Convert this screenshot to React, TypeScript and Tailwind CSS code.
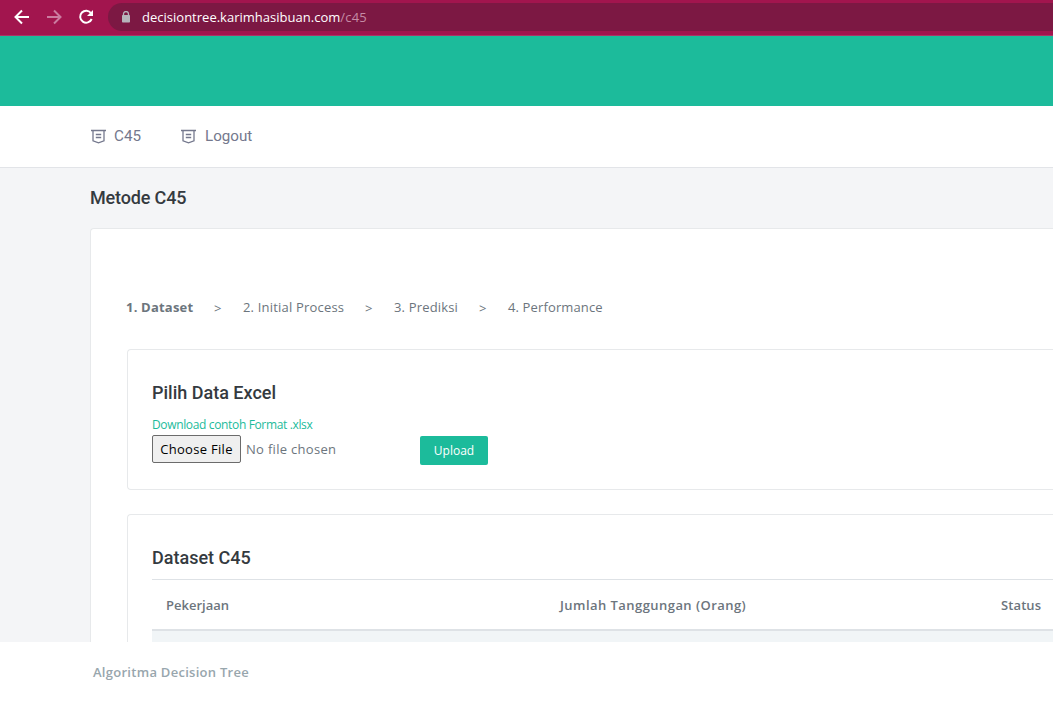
import React from "react";

function BadgeIcon() {
  return (
    <svg width="15" height="15" viewBox="0 0 15 15" fill="none" stroke="currentColor" strokeWidth="1.3" className="mt-[2px] shrink-0">
      <path d="M0 1.5H15M2 1.5V11.8L7.5 13.9L13 11.8V1.5M4.8 5.5H10.2M4.8 8.5H10.2" />
    </svg>
  );
}

function BrowserBar() {
  return (
    <div className="flex h-9 shrink-0 items-center border-b border-[#ab3566] bg-[#a2154e] pl-[14px] text-white">
      <svg width="16" height="16" viewBox="0 0 16 16" fill="none" stroke="currentColor" strokeWidth="2" className="mt-[-2px] shrink-0">
        <path d="M15 8H2M8 1.5L1.5 8L8 14.5" />
      </svg>
      <svg width="16" height="16" viewBox="0 0 16 16" fill="none" stroke="#cb7ca0" strokeWidth="2" className="mt-[-2px] ml-4 shrink-0">
        <path d="M1 8H14M8 1.5L14.5 8L8 14.5" />
      </svg>
      <svg width="16" height="16" viewBox="0 0 16 16" fill="none" className="mt-[-2px] ml-4 shrink-0">
        <path d="M13.1 4.2A6 6 0 1 0 13.7 10" stroke="currentColor" strokeWidth="2" />
        <path d="M15 1V7H9Z" fill="currentColor" />
      </svg>
      <div className="mt-[-2px] ml-[14px] flex h-7 flex-1 items-center rounded-l-full bg-[#7c1843] pl-[13px]">
        <svg width="10" height="12" viewBox="0 0 10 12" className="shrink-0">
          <path d="M2.5 5V3A2.4 2.4 0 0 1 7.5 3V5" fill="none" stroke="#b6b4bb" strokeWidth="1.3" />
          <rect x="1" y="4" width="8" height="7.5" rx="0.8" fill="#b6b4bb" />
        </svg>
        <span className="ml-[11px] font-['Open_Sans','Noto_Sans',sans-serif] text-[13px] leading-4 tracking-[0.01px] whitespace-nowrap">
          decisiontree.karimhasibuan.com<span className="tracking-[0.2px] text-[#c58ba5]">/c45</span>
        </span>
      </div>
    </div>
  );
}

function Navigation() {
  return (
    <nav className="flex h-[62px] shrink-0 items-center gap-10 border-b border-[#e2e4e8] bg-white pb-px pl-[91px] font-[Roboto,sans-serif] text-[15.2px] text-[#74788d]">
      <a className="flex items-center gap-2"><BadgeIcon />C45</a>
      <a className="flex items-center gap-[9px]"><BadgeIcon />Logout</a>
    </nav>
  );
}

function Steps() {
  return (
    <div className="flex h-5 items-center text-[13px] leading-5 whitespace-nowrap">
      <b className="w-[88px] tracking-[0.2px]">1. Dataset</b>
      <span className="w-[29px] pt-px">&gt;</span>
      <span className="w-[122px] tracking-[0.19px]">2. Initial Process</span>
      <span className="w-[29px] pt-px">&gt;</span>
      <span className="w-[85px] tracking-[0.17px]">3. Prediksi</span>
      <span className="w-[29px] pt-px">&gt;</span>
      <span className="tracking-[0.13px]">4. Performance</span>
    </div>
  );
}

function UploadCard() {
  return (
    <section className="h-[141px] rounded-l border border-r-0 border-[#e7e9eb] pt-8 pl-6">
      <h2 className="font-[Roboto,sans-serif] text-lg leading-[22px] font-medium text-[#343a40]">Pilih Data Excel</h2>
      <div className="mt-[11px] mb-px h-[19px] text-xs leading-[19px] tracking-[-0.35px] text-[#1cbb9b]">Download contoh Format .xlsx</div>
      <div className="flex">
        <div className="flex h-7 w-[268px] items-center">
          <button className="h-7 w-[89px] shrink-0 rounded-xs border border-[#6b6b6b] bg-[#efefef] pt-px text-[13px] tracking-[0.3px] whitespace-nowrap text-black">Choose File</button>
          <span className="ml-[5px] pt-px text-[13px] tracking-[0.3px]">No file chosen</span>
        </div>
        <button className="mt-px h-[29px] w-[68px] rounded-xs bg-[#1cbb9b] text-xs text-white">Upload</button>
      </div>
    </section>
  );
}

function DatasetCard() {
  return (
    <section className="mt-6 h-[260px] rounded-tl border border-r-0 border-[#e7e9eb] pt-8 pl-6">
      <h2 className="font-[Roboto,sans-serif] text-lg leading-[22px] font-medium text-[#343a40]">Dataset C45</h2>
      <div className="mt-[10px] flex h-[52px] items-center border-t border-b-2 border-t-[#dee2e6] border-b-[#dee2e6] pt-[2px] pl-[14px] text-[13px] font-semibold whitespace-nowrap">
        <div className="w-[394px] shrink-0">Pekerjaan</div>
        <div className="w-[441px] shrink-0 tracking-[0.45px]">Jumlah Tanggungan (Orang)</div>
        <div className="shrink-0 tracking-[0.1px]">Status</div>
      </div>
      <div className="h-12 bg-[#f1f5f7]" />
    </section>
  );
}

export default function App() {
  return (
    <div className="flex h-[703px] w-[1053px] flex-col overflow-hidden bg-[#f4f5f7] font-['Open_Sans','Noto_Sans',sans-serif] text-[#6c757d]">
      <BrowserBar />
      <header className="h-[70px] shrink-0 bg-[#1cbb9b]" />
      <Navigation />
      <main className="h-[474px] shrink-0 overflow-hidden pl-[90px]">
        <h1 className="mt-[18px] font-[Roboto,sans-serif] text-lg leading-6 font-medium tracking-[-0.15px] text-[#343a40]">Metode C45</h1>
        <div className="mt-[18px] h-[500px] rounded-tl border border-r-0 border-[#e7e9eb] bg-white pt-[68px] pl-9">
          <div className="mb-8 ml-[-1px]"><Steps /></div>
          <UploadCard />
          <DatasetCard />
        </div>
      </main>
      <footer className="flex h-[61px] shrink-0 items-center bg-white pl-[93px] text-[13px] font-semibold tracking-[0.28px] text-[#98a6ad]">Algoritma Decision Tree</footer>
    </div>
  );
}
